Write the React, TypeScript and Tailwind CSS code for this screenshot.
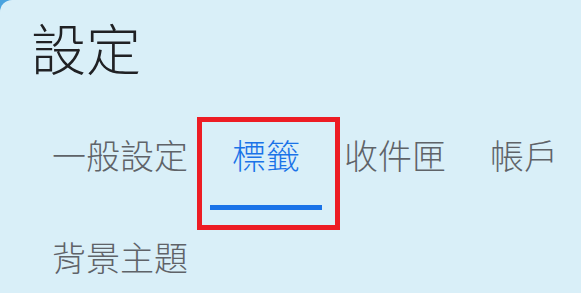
import React from "react";

const tabs = ["一般設定", "標籤", "收件匣", "帳戶", "背景主題"];

export default function App() {
  return (
    <div className="w-[581px] h-[293px] bg-[#4aa3df] overflow-hidden" style={{ fontFamily: '"Noto Sans CJK TC", "Noto Sans", sans-serif' }}>
      <div className="w-full h-full bg-[#d9eff8] rounded-tl-[12px]">
        <h1 className="pl-[31px] pt-[19px] text-[55px] leading-[55px] text-[#202124] font-light">設定</h1>
        <div className="mt-[32px] pl-[30px] flex flex-wrap">
          {tabs.map((t, i) => {
            const active = i === 1;
            return (
              <div key={t} className="relative h-[102px] px-[22px] pt-[32px] flex flex-col">
                <span className={`shrink-0 text-[34px] leading-[34px] font-light whitespace-nowrap ${active ? "text-[#1a73e8]" : "text-[#5f6368]"}`}>{t}</span>
                {active && (
                  <>
                    <div className="shrink-0 mt-[33px] -mx-[22px] h-[5px] bg-[#1a73e8]" />
                    <div className="absolute left-[-13px] right-[-18px] top-[11px] h-[113px] border-[5px] border-[#ed1c24]" />
                  </>
                )}
              </div>
            );
          })}
        </div>
      </div>
    </div>
  );
}
